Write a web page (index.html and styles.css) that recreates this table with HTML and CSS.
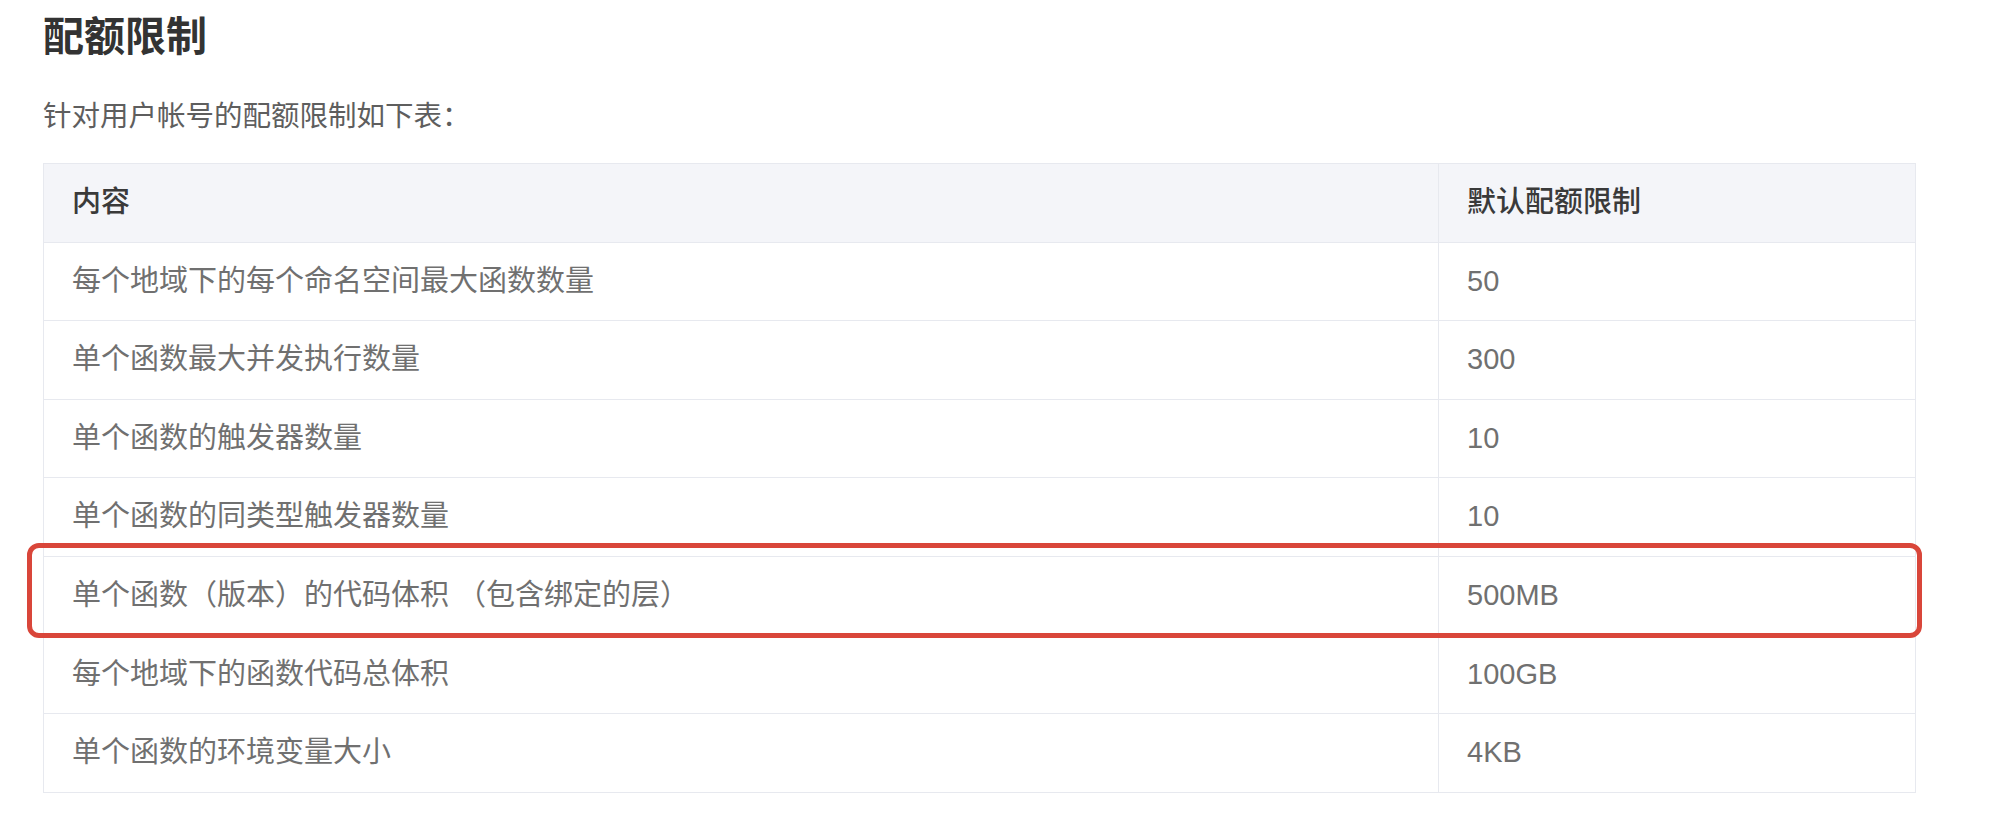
FILE: index.html
```html
<!DOCTYPE html>
<html lang="zh-CN">
<head>
<meta charset="utf-8">
<title>配额限制</title>
<link rel="stylesheet" href="styles.css">
</head>
<body>
<main class="page">
  <h2 class="title">配额限制</h2>
  <p class="lead">针对用户帐号的配额限制如下表：</p>
  <div class="table-wrap">
    <table class="quota">
      <colgroup>
        <col class="col-name">
        <col class="col-value">
      </colgroup>
      <thead>
        <tr><th>内容</th><th>默认配额限制</th></tr>
      </thead>
      <tbody>
        <tr><td>每个地域下的每个命名空间最大函数数量</td><td>50</td></tr>
        <tr><td>单个函数最大并发执行数量</td><td>300</td></tr>
        <tr><td>单个函数的触发器数量</td><td>10</td></tr>
        <tr><td>单个函数的同类型触发器数量</td><td>10</td></tr>
        <tr><td>单个函数（版本）的代码体积 （包含绑定的层）</td><td>500MB</td></tr>
        <tr><td>每个地域下的函数代码总体积</td><td>100GB</td></tr>
        <tr><td>单个函数的环境变量大小</td><td>4KB</td></tr>
      </tbody>
    </table>
    <div class="highlight"></div>
  </div>
</main>
</body>
</html>
```

FILE: styles.css
```css
html, body {
  margin: 0;
  padding: 0;
  background: #ffffff;
}

body {
  font-family: "Liberation Sans", "Noto Sans CJK SC", sans-serif;
  color: #666666;
}

.page {
  padding: 9px 0 0 43px;
}

.title {
  margin: 0;
  font-size: 41px;
  line-height: 57px;
  font-weight: 700;
  color: #333333;
}

.lead {
  margin: 29.5px 0 0 0;
  font-size: 28.5px;
  line-height: 40px;
  color: #5e5e5e;
}

.table-wrap {
  position: relative;
  margin-top: 27.5px;
  width: 1873px;
}

.quota {
  width: 1873px;
  border-collapse: collapse;
  table-layout: fixed;
  font-size: 29px;
}

.col-name {
  width: 1395px;
}

.quota tr {
  height: 78.6px;
}

.quota th,
.quota td {
  border: 1px solid #e7e9ef;
  padding: 0 0 0 28px;
  text-align: left;
  vertical-align: middle;
  line-height: 37.5px;
  white-space: nowrap;
}

.quota th {
  background: #f4f5f9;
  color: #3a3a3a;
  font-weight: 500;
}

.quota td {
  color: #707070;
  font-weight: 400;
}

.highlight {
  position: absolute;
  left: -16px;
  top: 380px;
  width: 1895px;
  height: 95px;
  box-sizing: border-box;
  border: 5px solid #d9463a;
  border-radius: 12px;
  pointer-events: none;
}
```
